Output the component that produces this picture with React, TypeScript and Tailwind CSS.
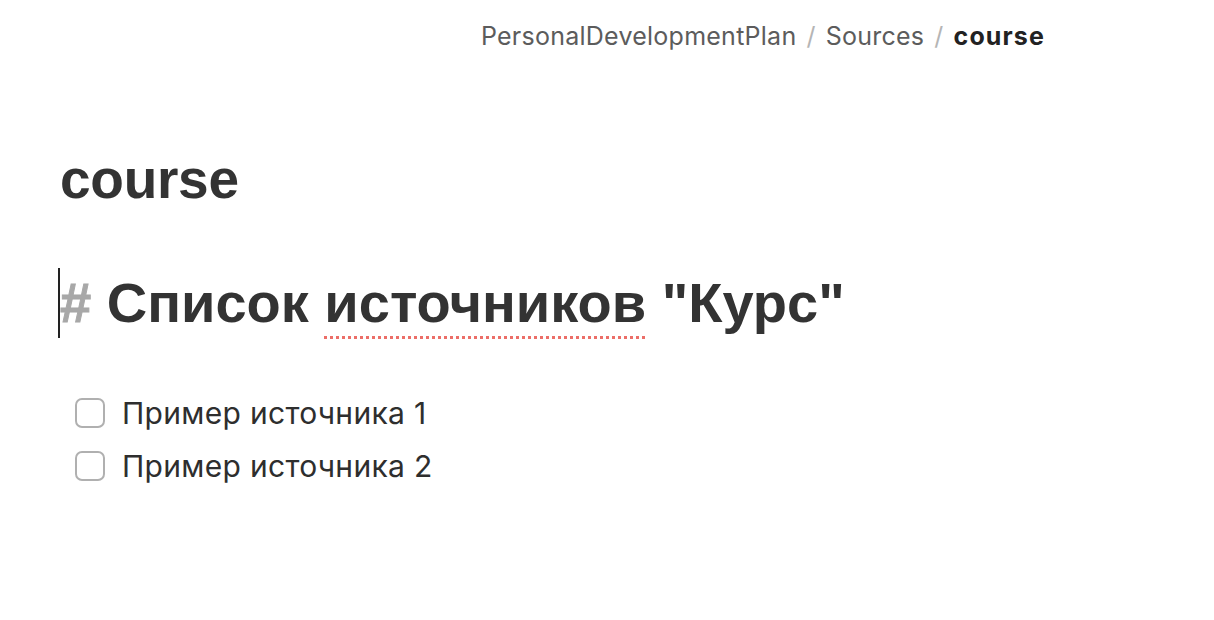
import React from 'react'

const items = ['Пример источника 1', 'Пример источника 2']

export default function App() {
  return (
    <div className="min-h-[620px] w-full bg-white text-[#2e2e2e]">
      <div className="flex justify-end pr-[169px] pt-[20px] text-[25px] leading-[32px] tracking-[0.01em] font-['Inter',sans-serif]">
        <span className="text-[#5c5c5c]">PersonalDevelopmentPlan</span>
        <span className="px-[10px] text-[#b5b5b5]">/</span>
        <span className="text-[#5c5c5c]">Sources</span>
        <span className="px-[10px] text-[#b5b5b5]">/</span>
        <span className="font-bold tracking-[0.045em] text-[#222222]">course</span>
      </div>

      <div className="pl-[60px]">
        <h1 className="mt-[95px] text-[55px] leading-[64px] font-bold tracking-[-0.005em] font-['Liberation_Sans',Arial,sans-serif] text-[#333333]">
          course
        </h1>

        <div className="relative mt-[57px] flex items-center">
          <span className="absolute left-[-2px] top-0 h-[70px] w-[2px] bg-[#222222]" />
          <h2 className="text-[56px] leading-[70px] font-bold font-['Liberation_Sans',Arial,sans-serif] text-[#333333]">
            <span className="text-[#a8a8a8] [-webkit-text-stroke:1px_#a8a8a8]"># </span>
            Список{' '}
            <span className="underline decoration-dotted decoration-[#ec6e68] decoration-[3px] underline-offset-[14px]">
              источников
            </span>{' '}
            "Курс"
          </h2>
        </div>

        <ul className="mt-[48px] flex flex-col font-['Inter',sans-serif]">
          {items.map((t) => (
            <li key={t} className="flex items-center h-[53px] pl-[15px]">
              <span className="h-[30px] w-[30px] shrink-0 rounded-[7px] border-2 border-[#b0b0b0] bg-white" />
              <span className="ml-[17px] text-[30px] leading-[36px] tracking-[0.01em] text-[#2e2e2e]">{t}</span>
            </li>
          ))}
        </ul>
      </div>
    </div>
  )
}
